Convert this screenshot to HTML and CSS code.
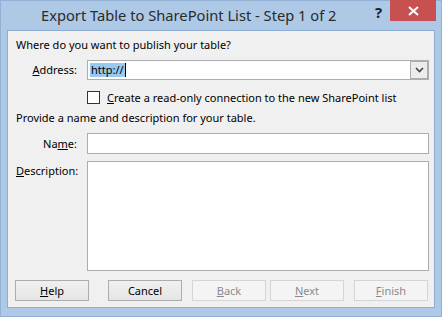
FILE: index.html
```html
<!DOCTYPE html>
<html>
    <head>
        <title>Export Table to SharePoint List</title>
        <link rel="stylesheet" href="styles.css">
    </head>
    <body>
        <div class="window">
            <div class="titlebar">
                <span class="title">Export Table to SharePoint List - Step 1 of 2</span>
                <span class="help-q">?</span>
                <span class="close-btn">
                    <svg width="11" height="10" viewBox="0 0 11 10"><path d="M1 1 L10 9 M10 1 L1 9" stroke="#fff" stroke-width="2"/></svg>
                </span>
            </div>
            <div class="client">
                <div class="line intro">Where do you want to publish your table?</div>

                <div class="row addr-row">
                    <label class="lbl right"><u>A</u>ddress:</label>
                    <div class="combo">
                        <span class="combo-text"><span class="sel">http://</span><span class="caret"></span></span>
                        <span class="combo-btn">
                            <svg width="9" height="6" viewBox="0 0 9 6"><path d="M1 1 L4.5 4.5 L8 1" stroke="#444" stroke-width="1.6" fill="none"/></svg>
                        </span>
                    </div>
                </div>

                <div class="check-row">
                    <span class="checkbox"></span>
                    <span><u>C</u>reate a read-only connection to the new SharePoint list</span>
                </div>

                <div class="line provide">Provide a name and description for your table.</div>

                <div class="row name-row">
                    <label class="lbl right">Na<u>m</u>e:</label>
                    <div class="field"></div>
                </div>

                <div class="row desc-row">
                    <label class="lbl"><u>D</u>escription:</label>
                    <div class="field area"></div>
                </div>

                <div class="buttons">
                    <span class="btn b-help"><u>H</u>elp</span>
                    <span class="btn b-cancel">Cancel</span>
                    <span class="btn off b-back"><u>B</u>ack</span>
                    <span class="btn off b-next"><u>N</u>ext</span>
                    <span class="btn off b-finish"><u>F</u>inish</span>
                </div>
            </div>
        </div>
    </body>
</html>
```
FILE: styles.css
```css
body { margin: 0; font-family: "Noto Sans", "DejaVu Sans", sans-serif; font-size: 11px; color: #000; }
.window { width: 440px; height: 315px; background: #adc9e6; border: 1px solid #93b1d6; position: relative; }
.titlebar { height: 29px; display: flex; align-items: center; }
.title { font-size: 14.7px; color: #2b2b2b; margin-left: 40px; margin-top: -2px; }
.help-q { position: absolute; left: 374px; top: 1px; font-size: 15px; font-weight: bold; color: #222; }
.close-btn { position: absolute; left: 389px; top: -1px; width: 46px; height: 21px; background: #c75050; display: flex; align-items: center; justify-content: center; }
.client { margin: 0 6px; height: 278px; background: #f0f0f0; border: 1px solid #8fadd2; padding: 6px 5px 0 7px; box-sizing: border-box; }

.line { height: 16px; line-height: 16px; padding-left: 1px; }
.row { display: grid; grid-template-columns: 62px 1fr; column-gap: 10px; }
.lbl { line-height: 16px; }
.right { text-align: right; }

.addr-row { margin-top: 7px; height: 20px; align-items: center; }
.combo { height: 20px; box-sizing: border-box; border: 1px solid #abadb3; background: #fff; display: flex; align-items: center; justify-content: space-between; }
.combo-text { padding-left: 2px; display: flex; align-items: center; }
.sel { background: #99c9ef; line-height: 14px; padding: 0 1px; }
.caret { width: 1px; height: 14px; background: #000; }
.combo-btn { width: 18px; height: 18px; box-sizing: border-box; border: 1px solid #adadad; background: #ececec; display: flex; align-items: center; justify-content: center; }

.check-row { margin-top: 10px; margin-left: 72px; display: flex; align-items: center; gap: 7px; height: 14px; }
.checkbox { width: 13px; height: 13px; box-sizing: border-box; border: 1px solid #333; background: #fff; }

.provide { margin-top: 6px; }

.name-row { margin-top: 7px; align-items: center; }
.field { height: 21px; box-sizing: border-box; border: 1px solid #abadb3; background: #fff; }
.desc-row { margin-top: 7px; }
.desc-row .lbl { padding-left: 1px; margin-top: 2px; }
.field.area { height: 110px; }

.buttons { margin-top: 9px; display: flex; height: 21px; }
.btn { width: 74px; height: 21px; box-sizing: border-box; border: 1px solid #adadad; background: linear-gradient(#f0f0f0, #e5e5e5); display: flex; align-items: center; justify-content: center; }
.btn.off { border-color: #d5d5d5; background: #f4f4f4; color: #8a8a8a; }
.b-cancel { margin-left: 19px; }
.b-back { margin-left: 10px; }
.b-next { margin-left: 4px; }
.b-finish { margin-left: 10px; }
```
